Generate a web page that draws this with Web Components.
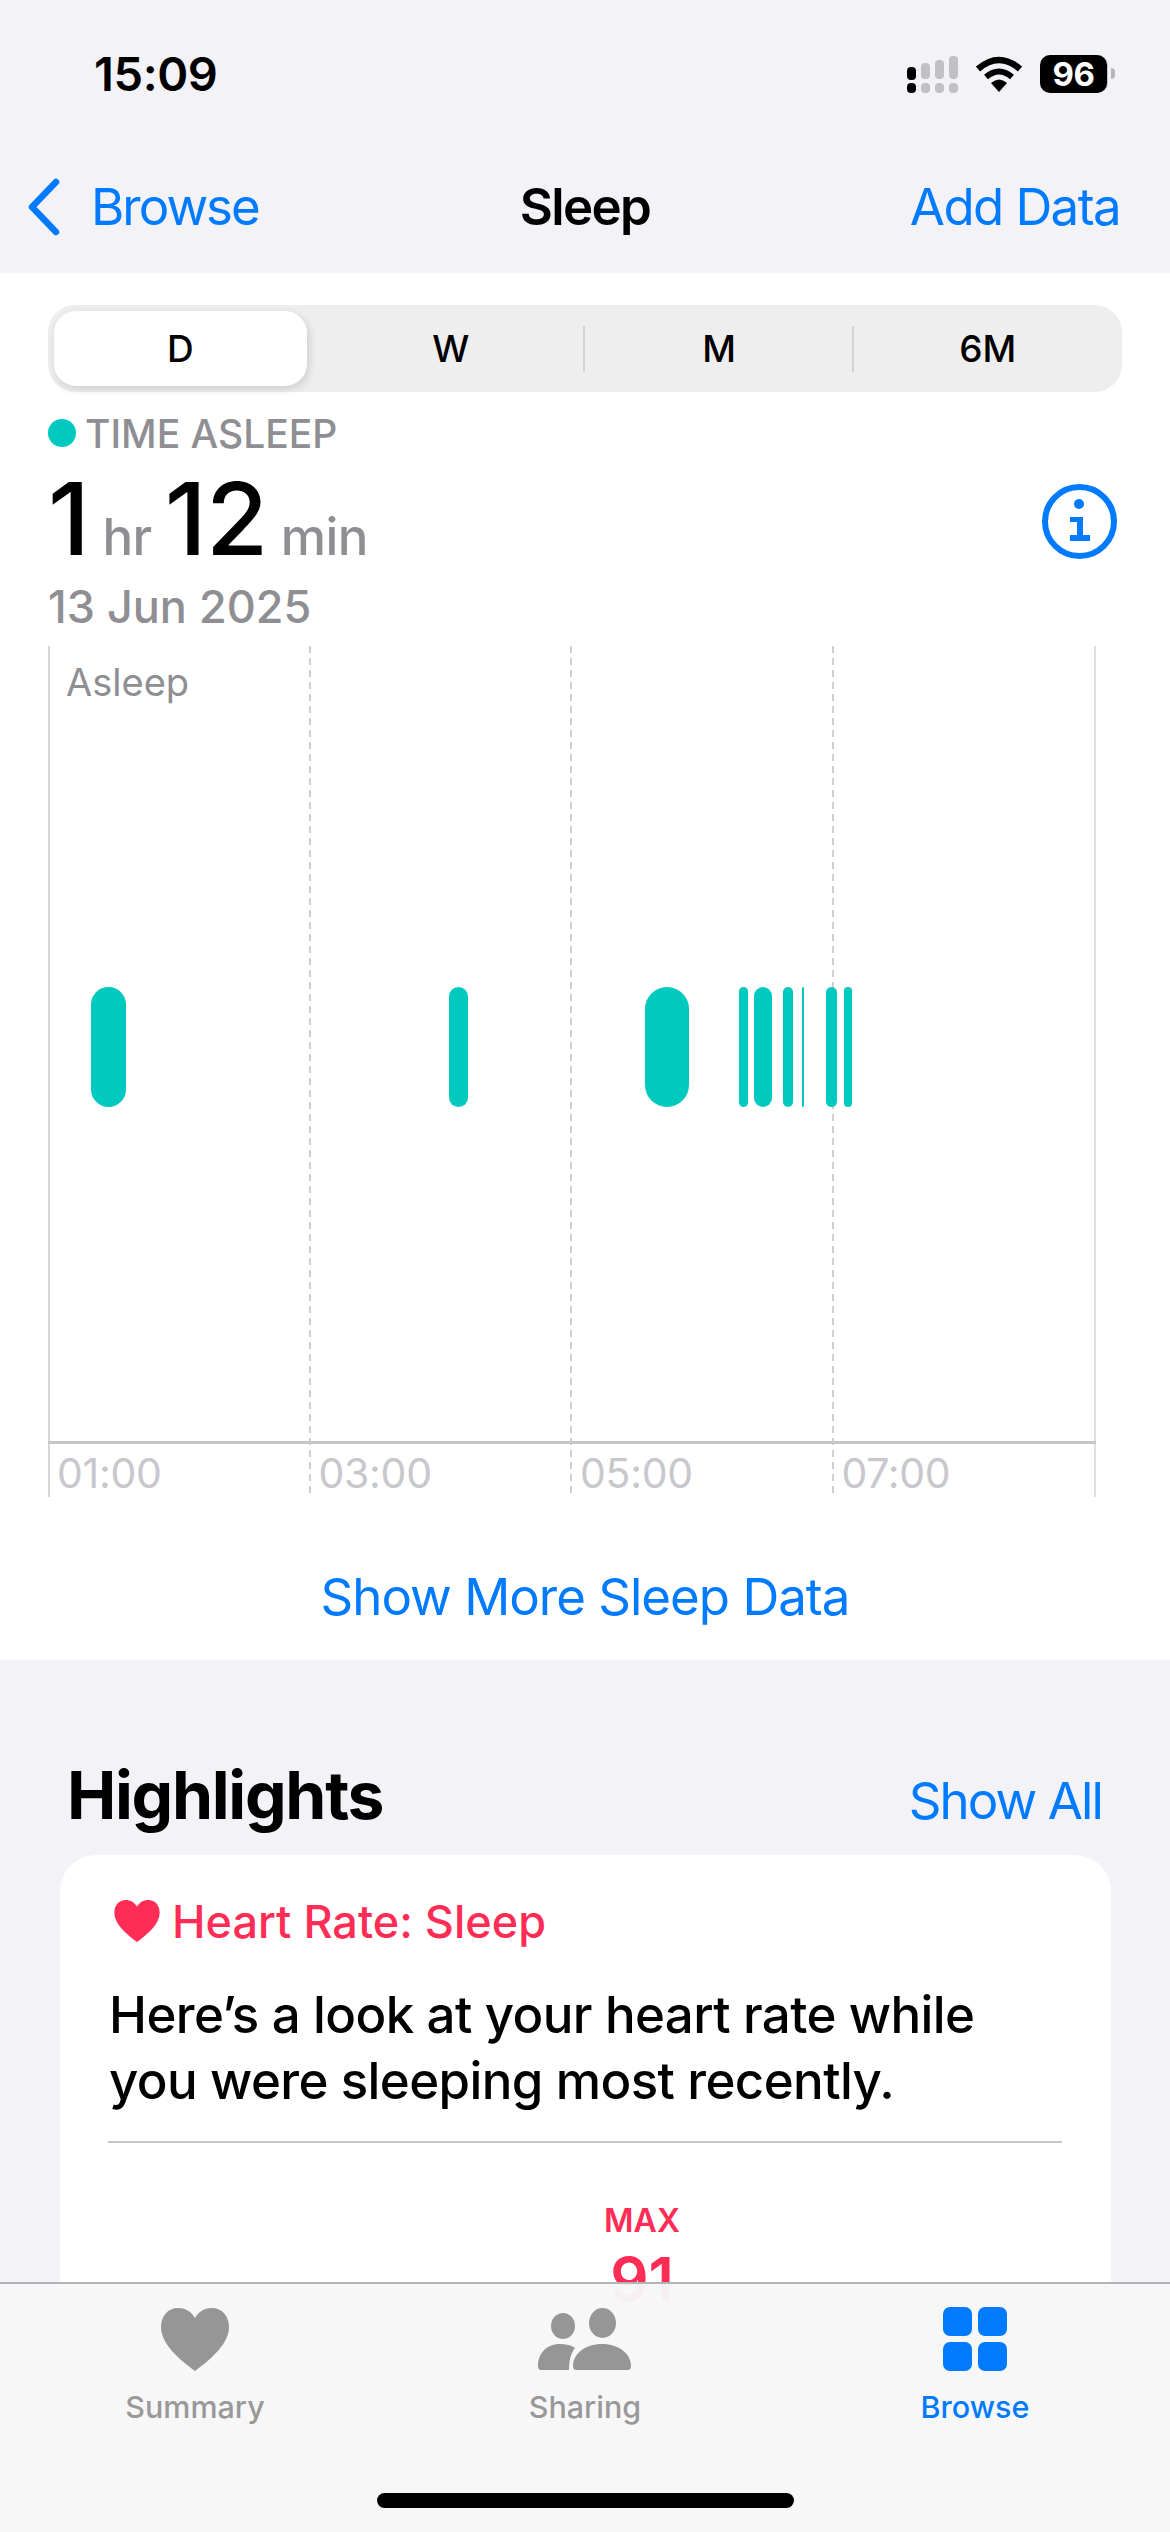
<!DOCTYPE html>
<html lang="en">
<head>
<meta charset="utf-8">
<title>Sleep</title>
<style>
  html, body { margin: 0; height: 2532px; overflow: hidden; }
  body {
    position: relative;
    background: #f2f2f7;
    font-family: Inter, "Liberation Sans", sans-serif;
    color: #000;
  }
</style>
</head>
<body>
<sleep-screen>
  <status-bar time="15:09" battery="96"></status-bar>
  <nav-bar back="Browse" title="Sleep" action="Add Data"></nav-bar>
  <sleep-panel>
    <segment-control items="D,W,M,6M"></segment-control>
    <sleep-summary label="TIME ASLEEP" date="13 Jun 2025"></sleep-summary>
    <sleep-chart></sleep-chart>
    <more-link>Show More Sleep Data</more-link>
  </sleep-panel>
  <highlights-section>
    <heart-card></heart-card>
  </highlights-section>
</sleep-screen>
<tab-bar></tab-bar>

<script>
class SleepScreen extends HTMLElement {
  constructor() {
    super();
    this.attachShadow({ mode: "open" });
    this.shadowRoot.innerHTML = `<style>:host{display:block}</style><slot></slot>`;
  }
}

class StatusBar extends HTMLElement {
  constructor() {
    super();
    this.attachShadow({ mode: "open" });
  }

  connectedCallback() {
    this.shadowRoot.innerHTML = /* html */ `
    <style>
      :host { display: flex; align-items: center; height: 148px; padding: 0 55px 0 94px; }
      .time { flex: 1; font-size: 47px; font-weight: 600; letter-spacing: -0.4px; line-height: 148px; }
      svg { display: block; }
      .signal { margin-right: 17px; }
      .wifi { margin-right: 17px; }
      .battery { position: relative; width: 75px; height: 38px; }
      .level {
        width: 67px; height: 38px; border-radius: 10px; background: #000; color: #fff;
        font-size: 33px; font-weight: 700; letter-spacing: -0.5px; line-height: 38px; text-align: center;
        box-shadow: 1px 0 0 #c0c0c5;
      }
      .nub { position: absolute; right: 0; top: 13px; width: 4px; height: 11px; border-radius: 0 6px 6px 0; background: #b5b5ba; }
    </style>
    <div class="time">${this.getAttribute("time")}</div>
    <svg class="signal" width="51" height="37" viewBox="0 0 51 37">
      <rect x="0" y="11" width="9" height="13" rx="4" fill="#000"/>
      <rect x="14" y="7" width="9" height="16" rx="4" fill="#c0c0c5"/>
      <rect x="28" y="4" width="9" height="19" rx="4" fill="#c0c0c5"/>
      <rect x="42" y="0" width="9" height="23" rx="4" fill="#c0c0c5"/>
      <rect x="0" y="27" width="9" height="10" rx="4" fill="#000"/>
      <rect x="14" y="27" width="9" height="10" rx="4" fill="#c0c0c5"/>
      <rect x="28" y="27" width="9" height="10" rx="4" fill="#c0c0c5"/>
      <rect x="42" y="27" width="9" height="10" rx="4" fill="#c0c0c5"/>
    </svg>
    <svg class="wifi" width="48" height="36" viewBox="0 0 48 36">
      <path d="M3 13 Q24 -5 45 13" fill="none" stroke="#000" stroke-width="6.5"/>
      <path d="M11 21 Q24 10 37 21" fill="none" stroke="#000" stroke-width="6"/>
      <path d="M24 36 L16 27 Q24 20 32 27 Z" fill="#000"/>
    </svg>
    <div class="battery">
      <div class="level">${this.getAttribute("battery")}</div>
      <div class="nub"></div>
    </div>`;
  }
}

class NavBar extends HTMLElement {
  constructor() {
    super();
    this.attachShadow({ mode: "open" });
  }

  connectedCallback() {
    this.shadowRoot.innerHTML = /* html */ `
    <style>
      :host {
        display: grid; grid-template-columns: 1fr auto 1fr; align-items: center;
        height: 125px; padding: 0 50px 8px; box-sizing: border-box;
        font-size: 51px; line-height: 108px; color: #007aff; letter-spacing: -1.6px;
      }
      .back { display: flex; align-items: center; gap: 31px; margin-left: -22px; letter-spacing: -2px; }
      .title { color: #000; font-weight: 600; }
      .action { text-align: right; }
      svg { display: block; }
    </style>
    <div class="back">
      <svg width="32" height="58" viewBox="0 0 32 58">
        <path d="M28 4 L4 29 L28 54" fill="none" stroke="#007aff" stroke-width="6.5" stroke-linecap="round" stroke-linejoin="round"/>
      </svg>
      <span>${this.getAttribute("back")}</span>
    </div>
    <div class="title">${this.getAttribute("title")}</div>
    <div class="action">${this.getAttribute("action")}</div>`;
  }
}

class SleepPanel extends HTMLElement {
  constructor() {
    super();
    this.attachShadow({ mode: "open" });
    this.shadowRoot.innerHTML = `
    <style>
      :host { display: block; background: #fff; height: 1387px; padding: 32px 48px 0; box-sizing: border-box; }
    </style>
    <slot></slot>`;
  }
}

class SegmentControl extends HTMLElement {
  constructor() {
    super();
    this.attachShadow({ mode: "open" });
  }

  connectedCallback() {
    const items = this.getAttribute("items").split(",");
    this.shadowRoot.innerHTML = /* html */ `
    <style>
      :host {
        display: grid; grid-template-columns: repeat(4, 1fr); width: 1074px; height: 87px;
        padding: 6px 0; box-sizing: border-box; border-radius: 27px; background: #eeeeef;
      }
      .seg { position: relative; text-align: center; font-size: 37px; font-weight: 500; line-height: 75px; }
      .seg.on {
        margin: 0 10px 0 6px; background: #fff; border-radius: 22px;
        box-shadow: 2px 3px 8px rgba(0, 0, 0, 0.14);
      }
      .seg.rule::before {
        content: ""; position: absolute; left: -2px; top: 15px; width: 2px; height: 46px; background: #d1d1d6;
      }
    </style>
    ${items.map((t, i) => `<div class="seg ${i === 0 ? "on" : ""} ${i > 1 ? "rule" : ""}">${t}</div>`).join("")}`;
  }
}

class SleepSummary extends HTMLElement {
  constructor() {
    super();
    this.attachShadow({ mode: "open" });
  }

  connectedCallback() {
    this.shadowRoot.innerHTML = /* html */ `
    <style>
      :host { display: block; position: relative; height: 254px; color: #8e8e93; }
      .label { display: flex; align-items: center; gap: 9px; height: 44px; padding-top: 19px; font-size: 39px; font-weight: 500; }
      .dot { width: 28px; height: 28px; border-radius: 50%; background: #00c9bf; }
      .total { display: flex; align-items: baseline; height: 108px; margin-top: 9px; line-height: 108px; font-size: 51px; font-weight: 500; }
      .total b { font-size: 101px; font-weight: 500; color: #000; letter-spacing: -0.5px; margin-right: 13px; }
      .total span { margin-right: 13px; letter-spacing: -0.6px; }
      .date { margin-top: 7px; font-size: 45px; font-weight: 500; line-height: 56px; }
      svg { position: absolute; right: 5px; top: 92px; display: block; }
    </style>
    <div class="label"><div class="dot"></div>${this.getAttribute("label")}</div>
    <div class="total"><b>1</b><span>hr</span><b>12</b><span>min</span></div>
    <div class="date">${this.getAttribute("date")}</div>
    <svg width="75" height="75" viewBox="0 0 75 75">
      <circle cx="37.5" cy="37.5" r="34.5" fill="none" stroke="#007aff" stroke-width="6"/>
      <circle cx="37" cy="20" r="5" fill="#007aff"/>
      <path d="M28 33 H41 V51 H48 V57 H28 V51 H35 V38 H28 Z" fill="#007aff"/>
    </svg>`;
  }
}

class SleepChart extends HTMLElement {
  constructor() {
    super();
    this.attachShadow({ mode: "open" });
    // left edge and width of each sleep block, from the chart's left line
    this.blocks = [
      [43, 35], [401, 19], [597, 44], [691, 9], [706, 18],
      [735, 10], [754, 2], [778, 11], [796, 8]
    ];
    this.hours = ["01:00", "03:00", "05:00", "07:00"];
  }

  connectedCallback() {
    this.shadowRoot.innerHTML = /* html */ `
    <style>
      :host {
        display: grid; grid-template-columns: repeat(4, 1fr); position: relative;
        width: 1048px; height: 851px; box-sizing: border-box; border-right: 2px solid #e0e0e3;
      }
      .col { position: relative; display: flex; flex-direction: column; justify-content: flex-end; padding-left: 9px; }
      .col::before {
        content: ""; position: absolute; left: -1px; top: 0; bottom: 0; width: 2px;
        background: repeating-linear-gradient(to bottom, #cfcfd3 0 7px, transparent 7px 12px);
      }
      .col:first-of-type::before { left: 0; background: #d6d6d9; }
      .hour { font-size: 41px; line-height: 55px; color: #c7c7cc; margin-bottom: -4px; letter-spacing: -0.3px; }
      .name { position: absolute; left: 18px; top: 14px; font-size: 38px; line-height: 44px; color: #8e8e93; }
      .axis { position: absolute; left: 0; right: -2px; top: 795px; height: 3px; background: #c6c6c8; }
      .block { position: absolute; top: 341px; height: 120px; border-radius: 30px; background: #00c9bf; }
    </style>
    ${this.hours.map((h, i) => `<div class="col">${i === 0 ? `<div class="name">Asleep</div>` : ""}<div class="hour">${h}</div></div>`).join("")}
    <div class="axis"></div>
    ${this.blocks.map(([x, w]) => `<div class="block" style="left:${x}px;width:${w}px"></div>`).join("")}`;
  }
}

class MoreLink extends HTMLElement {
  constructor() {
    super();
    this.attachShadow({ mode: "open" });
    this.shadowRoot.innerHTML = `
    <style>
      :host { display: block; text-align: center; color: #007aff; font-size: 51px; line-height: 60px; letter-spacing: -1px; padding-top: 70px; }
    </style>
    <slot></slot>`;
  }
}

class HighlightsSection extends HTMLElement {
  constructor() {
    super();
    this.attachShadow({ mode: "open" });
    this.shadowRoot.innerHTML = /* html */ `
    <style>
      :host { display: block; padding: 0 59px 0 60px; }
      header { display: flex; justify-content: space-between; align-items: baseline; height: 195px; padding: 95px 9px 0 7px; box-sizing: border-box; line-height: 80px; }
      h2 { margin: 0; font-size: 66px; font-weight: 700; letter-spacing: -1.3px; }
      a { color: #007aff; font-size: 51px; letter-spacing: -1.9px; }
    </style>
    <header><h2>Highlights</h2><a>Show All</a></header>
    <slot></slot>`;
  }
}

class HeartCard extends HTMLElement {
  constructor() {
    super();
    this.attachShadow({ mode: "open" });
    this.shadowRoot.innerHTML = /* html */ `
    <style>
      :host { display: block; height: 800px; padding: 0 49px 0 48px; background: #fff; border-radius: 36px; }
      .tag { display: flex; align-items: center; gap: 12px; height: 56px; padding: 38px 0 0 6px; color: #ff2d55; font-size: 45px; font-weight: 500; }
      svg { display: block; }
      p { margin: 0; padding: 33px 0 0 1px; font-size: 51px; font-weight: 500; line-height: 66px; letter-spacing: -0.6px; }
      hr { margin: 27px 0 0; border: 0; height: 2px; background: #c6c6c8; }
      .stat { text-align: center; color: #ff2d55; padding: 58px 0 0 114px; }
      .stat div:first-child { font-size: 32px; font-weight: 600; line-height: 40px; }
      .stat div:last-child { font-size: 60px; font-weight: 600; line-height: 76px; }
    </style>
    <div class="tag">
      <svg width="46" height="42" viewBox="0 0 68 63"><path d="M34 10 C30 3 24 0 17 0 C7 0 0 8 0 19 C0 36 18 51 34 63 C50 51 68 36 68 19 C68 8 61 0 51 0 C44 0 38 3 34 10 Z" fill="#ff2d55"/></svg>
      Heart Rate: Sleep
    </div>
    <p>Here’s a look at your heart rate while<br>you were sleeping most recently.</p>
    <hr>
    <div class="stat"><div>MAX</div><div>91</div></div>`;
  }
}

class TabBar extends HTMLElement {
  constructor() {
    super();
    this.attachShadow({ mode: "open" });
    this.shadowRoot.innerHTML = /* html */ `
    <style>
      :host {
        position: absolute; left: 0; right: 0; bottom: 0; height: 250px; box-sizing: border-box;
        display: grid; grid-template-columns: repeat(3, 1fr); padding-top: 23px;
        background: rgba(247, 247, 248, 0.97); border-top: 2px solid #b4b4b8;
        color: #999; font-size: 30.5px; font-weight: 500;
      }
      .tab { display: flex; flex-direction: column; align-items: center; }
      .tab svg { display: block; height: 64px; margin-bottom: 18px; }
      .tab span { line-height: 36px; }
      .tab.on { color: #007aff; }
      .home { position: absolute; left: 377px; top: 209px; width: 417px; height: 15px; border-radius: 8px; background: #000; }
    </style>
    <div class="tab">
      <svg width="68" height="64" viewBox="0 0 68 64"><path d="M34 11 C30 4 24 1 17 1 C7 1 0 9 0 20 C0 37 18 52 34 64 C50 52 68 37 68 20 C68 9 61 1 51 1 C44 1 38 4 34 11 Z" fill="#969696"/></svg>
      <span>Summary</span>
    </div>
    <div class="tab">
      <svg width="94" height="64" viewBox="0 0 94 64">
        <ellipse cx="64.5" cy="16" rx="13.5" ry="15" fill="#969696"/>
        <ellipse cx="25" cy="19" rx="12" ry="13" fill="#969696"/>
        <path d="M38 63 Q35 63 35 59 C35 47 47 37 64 37 C81 37 93 47 93 59 Q93 63 90 63 Z" fill="#969696"/>
        <path d="M3 63 Q0 63 0 59 C0 47 8 37 22 37 C28 37 33 38 37 41 C33 46 31 53 31 63 Z" fill="#969696"/>
      </svg>
      <span>Sharing</span>
    </div>
    <div class="tab on">
      <svg width="64" height="64" viewBox="0 0 64 64">
        <rect x="0" y="0" width="29" height="29" rx="7" fill="#007aff"/>
        <rect x="35" y="0" width="29" height="29" rx="7" fill="#007aff"/>
        <rect x="0" y="35" width="29" height="29" rx="7" fill="#007aff"/>
        <rect x="35" y="35" width="29" height="29" rx="7" fill="#007aff"/>
      </svg>
      <span>Browse</span>
    </div>
    <div class="home"></div>`;
  }
}

customElements.define("sleep-screen", SleepScreen);
customElements.define("status-bar", StatusBar);
customElements.define("nav-bar", NavBar);
customElements.define("sleep-panel", SleepPanel);
customElements.define("segment-control", SegmentControl);
customElements.define("sleep-summary", SleepSummary);
customElements.define("sleep-chart", SleepChart);
customElements.define("more-link", MoreLink);
customElements.define("highlights-section", HighlightsSection);
customElements.define("heart-card", HeartCard);
customElements.define("tab-bar", TabBar);
</script>
</body>
</html>
